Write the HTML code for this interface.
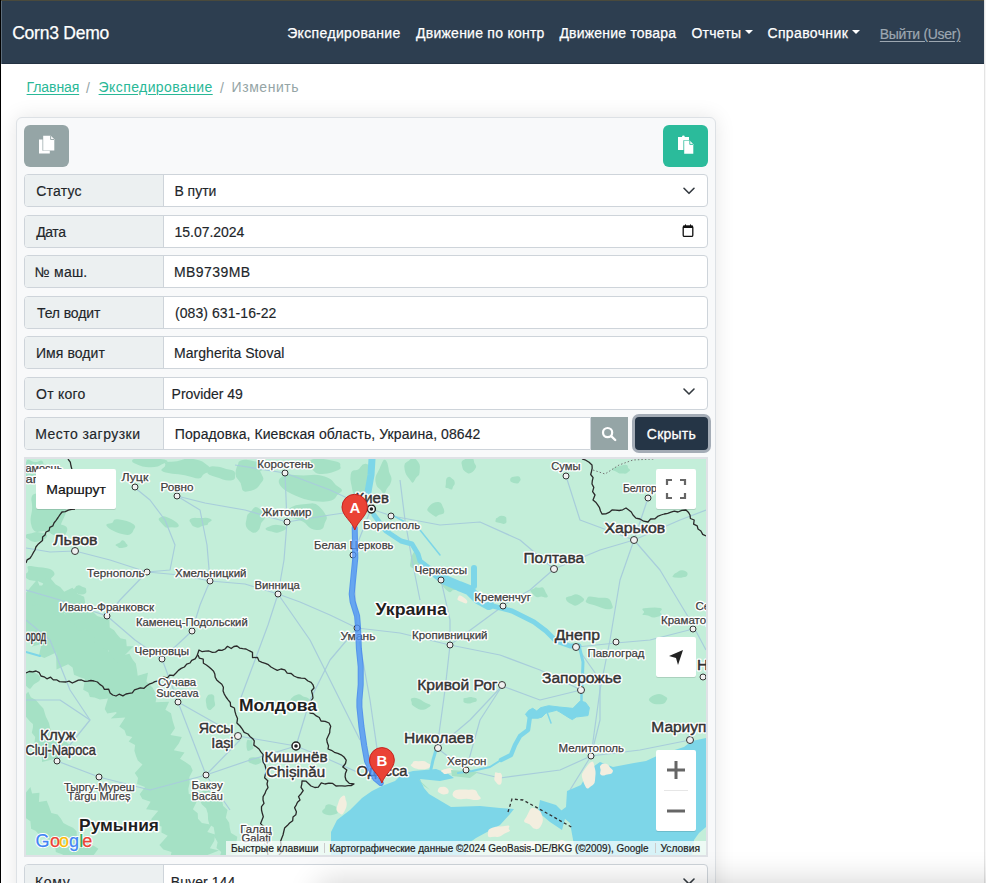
<!DOCTYPE html>
<html><head><meta charset="utf-8">
<style>
*{box-sizing:border-box;margin:0;padding:0}
html,body{width:986px;height:883px;overflow:hidden;background:#fff;font-family:"Liberation Sans",sans-serif}
#root{position:relative;width:986px;height:883px;overflow:hidden;background:#fff}
.abs{position:absolute}
.tx{position:absolute;white-space:nowrap;line-height:1}
#topline{left:0;top:0;width:986px;height:1px;background:#4a4a3c}
#leftline{left:0;top:0;width:1px;height:883px;background:#000}
#navhl{left:1px;top:1px;width:1px;height:63px;background:#5d6d7c}
#rightstrip{left:984px;top:0;width:2px;height:883px;background:#f7f7f7;border-left:1px solid #e4e4e4}
#nav{left:1px;top:1px;width:983px;height:63px;background:#2d3e50;border-bottom:1px solid #233242}
.nt{color:#fff;font-size:14px;-webkit-text-stroke:0.25px #fff}
.caret{position:absolute;width:0;height:0;border-left:4px solid transparent;border-right:4px solid transparent;border-top:4.5px solid #fff}
.bc{font-size:14px;color:#95a5a6}
.bca{color:#2ab897;text-decoration:underline;text-decoration-thickness:1px;text-underline-offset:2px}
#card{left:16px;top:117px;width:700px;height:800px;background:#f8f9fa;border:1px solid #dde1e5;border-radius:6px;box-shadow:0 0 20px rgba(0,0,0,.10)}
.btn{position:absolute;border-radius:6px}
.row{position:absolute;left:24px;width:684px;height:33px;border:1px solid #ced4da;border-radius:4px;background:#fff;overflow:hidden}
.row .lab{position:absolute;left:0;top:0;width:139px;height:31px;background:#ecf0f1;border-right:1px solid #ced4da}
.lt{font-size:14px;color:#212529;-webkit-text-stroke:0.15px #212529}
#bottomshade{left:322px;top:886px;width:900px;height:200px;border-radius:10px;background:#888;box-shadow:0 0 30px 6px rgba(0,0,0,.16)}
</style></head><body><div id="root">
<div class="abs" id="nav"></div>
<div class="abs" id="topline"></div>
<div class="abs" id="leftline"></div>
<div class="abs" id="navhl"></div>
<div class="abs" id="rightstrip"></div>
<div class="tx nt" id="brand" style="left:12.2px;top:25.4px;font-size:17.5px;letter-spacing:-0.23px">Corn3 Demo</div>
<div class="tx nt" id="n1" style="left:287.2px;top:26.4px;letter-spacing:0.36px">Экспедирование</div>
<div class="tx nt" id="n2" style="left:416.0px;top:26.4px;letter-spacing:0.25px">Движение по контр</div>
<div class="tx nt" id="n3" style="left:559.4px;top:26.4px;letter-spacing:0.21px">Движение товара</div>
<div class="tx nt" id="n4" style="left:691.4px;top:26.4px;letter-spacing:0.28px">Отчеты</div>
<div class="caret" style="left:745.3px;top:29.5px"></div>
<div class="tx nt" id="n5" style="left:767.4px;top:26.4px;letter-spacing:0.38px">Справочник</div>
<div class="caret" style="left:851.6px;top:29.5px"></div>
<div class="tx nt" id="n6" style="left:879.8px;top:27.4px;color:#9da7b1;-webkit-text-stroke:0.2px #9da7b1;text-decoration:underline;text-underline-offset:2px;letter-spacing:-0.29px">Выйти (User)</div>

<div class="tx bc bca" id="b1" style="left:26.6px;top:80.0px;letter-spacing:-0.10px">Главная</div>
<div class="tx bc" id="s1" style="left:86.0px;top:81.0px">/</div>
<div class="tx bc bca" id="b2" style="left:98.6px;top:80.0px;letter-spacing:0.41px">Экспедирование</div>
<div class="tx bc" id="s2" style="left:220.0px;top:81.0px">/</div>
<div class="tx bc" id="b3" style="left:231.6px;top:80.0px;letter-spacing:0.54px">Изменить</div>

<div class="abs" id="card"></div>
<div class="btn" style="left:24px;top:125px;width:45px;height:42px;background:#95a5a6"></div>
<svg class="abs" style="left:24px;top:125px" width="45" height="42" viewBox="24 125 45 42">
<path d="M39,139.5 H42.5 V150.8 H49.8 V153.6 H39 Z" fill="#fff"/>
<path d="M43.2,135.8 H50.8 L54.3,139.3 V150.6 H43.2 Z" fill="#fff"/>
<path d="M50.6,135.8 V139.5 H54.3" fill="none" stroke="#95a5a6" stroke-width="0.9"/>
</svg>
<div class="btn" style="left:663px;top:125px;width:45px;height:42px;background:#2bbb9b"></div>
<svg class="abs" style="left:663px;top:125px" width="45" height="42" viewBox="663 125 45 42">
<path d="M678,137 H682 A1.4,1.4 0 0 1 684.8,137 H689 V140.2 H683.4 V150 H678 Z" fill="#fff"/>
<path d="M684.2,140.8 H690 L693.3,144.2 V153.7 H684.2 Z" fill="#fff"/>
<path d="M689.8,140.8 V144.4 H693.3" fill="none" stroke="#2bbb9b" stroke-width="0.9"/>
</svg>

<div class="row" style="top:174px"><div class="lab"></div></div>
<div class="row" style="top:214.5px"><div class="lab"></div></div>
<div class="row" style="top:255px"><div class="lab"></div></div>
<div class="row" style="top:295.5px"><div class="lab"></div></div>
<div class="row" style="top:336px"><div class="lab"></div></div>
<div class="row" style="top:376.5px"><div class="lab"></div></div>
<div class="row" style="top:417px;width:567px;border-radius:4px 0 0 4px"><div class="lab"></div></div>
<div class="btn" style="left:591px;top:417px;width:37px;height:33px;background:#95a5a6;border-radius:0"></div>
<svg class="abs" style="left:595px;top:420px" width="30" height="27" viewBox="595 420 30 27">
<circle cx="607.6" cy="432.6" r="4.6" fill="none" stroke="#fff" stroke-width="2.2"/>
<path d="M611.2,436.2 L615.2,440" stroke="#fff" stroke-width="2.4" stroke-linecap="round"/>
</svg>
<div class="btn" style="left:631.5px;top:413.7px;width:79.5px;height:39.4px;background:#253546;border:3.3px solid #a4acb6;border-radius:7px"></div>
<div class="row" style="top:864px"><div class="lab"></div></div>

<div class="tx lt" id="l1" style="left:36.2px;top:184.2px;letter-spacing:0.20px">Статус</div>
<div class="tx lt" id="v1" style="left:174.4px;top:184.2px">В пути</div>
<div class="tx lt" id="l2" style="left:36.2px;top:225.1px;letter-spacing:-0.40px">Дата</div>
<div class="tx lt" id="v2" style="left:174.6px;top:225.1px;letter-spacing:-0.05px">15.07.2024</div>
<div class="tx lt" id="l3" style="left:34.8px;top:265.4px;letter-spacing:0.20px">№ маш.</div>
<div class="tx lt" id="v3" style="left:174.0px;top:265.4px;letter-spacing:0.43px">MB9739MB</div>
<div class="tx lt" id="l4" style="left:37.0px;top:306.0px;letter-spacing:-0.12px">Тел водит</div>
<div class="tx lt" id="v4" style="left:175.0px;top:306.0px;letter-spacing:0.07px">(083) 631-16-22</div>
<div class="tx lt" id="l5" style="left:36.0px;top:346.3px;letter-spacing:0.06px">Имя водит</div>
<div class="tx lt" id="v5" style="left:174.0px;top:346.3px;letter-spacing:0.04px">Margherita Stoval</div>
<div class="tx lt" id="l6" style="left:36.0px;top:387.3px;letter-spacing:0.24px">От кого</div>
<div class="tx lt" id="v6" style="left:171.6px;top:387.3px;letter-spacing:-0.04px">Provider 49</div>
<div class="tx lt" id="l7" style="left:35.2px;top:427.4px;letter-spacing:0.46px">Место загрузки</div>
<div class="tx lt" id="v7" style="left:174.8px;top:427.4px;letter-spacing:0.08px">Порадовка, Киевская область, Украина, 08642</div>
<div class="tx lt" id="v8" style="left:646.8px;top:427.0px;color:#fff;-webkit-text-stroke:0.3px #fff;letter-spacing:0.24px">Скрыть</div>
<div class="tx lt" id="l9" style="left:35.0px;top:875.0px;letter-spacing:0.67px">Кому</div>
<div class="tx lt" id="v9" style="left:170.8px;top:875.0px;letter-spacing:0.07px">Buyer 144</div>

<svg class="abs" style="left:670px;top:178px" width="35" height="250" viewBox="670 178 35 250">
<path d="M684,188.3 L689,193.3 L694,188.3" fill="none" stroke="#343a40" stroke-width="1.6" stroke-linecap="round" stroke-linejoin="round"/>
<path d="M684,389 L689,394 L694,389" fill="none" stroke="#343a40" stroke-width="1.6" stroke-linecap="round" stroke-linejoin="round"/>
<rect x="683.2" y="226.2" width="9.6" height="10.2" rx="1.2" fill="none" stroke="#111" stroke-width="1.3"/>
<rect x="683" y="225.6" width="10" height="2.4" fill="#111"/>
<rect x="685" y="224.4" width="1" height="2" fill="#111"/><rect x="690" y="224.4" width="1" height="2" fill="#111"/>
</svg>
<svg class="abs" style="left:670px;top:860px" width="35" height="23" viewBox="670 860 35 23">
<path d="M684,879 L689,884 L694,879" fill="none" stroke="#343a40" stroke-width="1.6" stroke-linecap="round" stroke-linejoin="round"/>
</svg>

<div class="abs" id="map" style="left:24px;top:457px;width:684px;height:400px;border:2px solid #dfe2e6;background:#c4eed9;overflow:hidden"></div>
<svg class="abs" style="left:26px;top:459px" width="680" height="396" viewBox="26 459 680 396">
<rect x="0" y="0" width="1000" height="1000" fill="#c3eed9"/>
<g fill="#a5e1c5"><path d="M64.9,506.7Q67.2,511.9 64.2,516.9Q61.3,522.0 59.3,529.9Q57.4,537.9 51.7,533.7Q46.0,529.5 40.2,531.6Q34.3,533.6 31.9,527.3Q29.6,520.9 31.2,514.7Q32.9,508.5 31.6,501.3Q30.3,494.1 36.3,493.5Q42.2,492.9 46.5,488.2Q50.7,483.4 54.0,488.7Q57.3,493.9 59.9,497.7Q62.5,501.4 64.9,506.7Z"/><path d="M45.1,467.9Q46.4,470.0 47.1,473.1Q47.8,476.1 43.6,476.3Q39.4,476.4 37.2,477.2Q35.0,478.1 31.7,478.7Q28.5,479.4 24.9,478.0Q21.4,476.6 21.9,473.3Q22.4,470.0 23.9,467.7Q25.4,465.4 26.2,461.9Q27.0,458.5 31.0,460.8Q35.0,463.2 38.8,461.2Q42.5,459.2 43.2,462.5Q43.9,465.7 45.1,467.9Z"/><path d="M67.2,528.4Q67.5,530.0 66.9,531.5Q66.3,532.9 65.3,534.5Q64.3,536.0 62.2,537.9Q60.0,539.8 58.1,537.6Q56.1,535.4 53.5,534.8Q50.8,534.2 49.9,532.1Q49.0,530.0 50.6,528.2Q52.1,526.4 53.5,524.6Q54.8,522.8 57.4,523.6Q60.0,524.4 61.7,524.8Q63.5,525.2 65.2,526.0Q66.9,526.8 67.2,528.4Z"/><path d="M47.1,535.4Q47.3,537.0 45.7,538.2Q44.2,539.4 42.3,540.1Q40.3,540.8 38.2,541.5Q36.0,542.3 33.6,541.7Q31.2,541.2 29.9,540.2Q28.6,539.1 26.2,538.1Q23.9,537.0 25.0,535.6Q26.1,534.2 29.0,533.8Q31.9,533.4 33.9,532.6Q36.0,531.7 38.5,532.2Q41.1,532.6 44.0,533.2Q46.9,533.8 47.1,535.4Z"/><path d="M211.0,468.2Q213.9,470.9 208.4,472.3Q203.0,473.7 201.8,476.8Q200.6,480.0 192.5,477.3Q184.3,474.6 178.4,474.3Q172.5,474.1 165.8,472.4Q159.0,470.7 162.6,468.4Q166.2,466.1 165.1,463.8Q164.1,461.4 170.6,461.7Q177.1,461.9 181.6,459.9Q186.0,458.0 193.3,459.1Q200.7,460.3 204.4,462.9Q208.1,465.6 211.0,468.2Z"/><path d="M166.9,460.6Q168.9,462.0 165.1,463.1Q161.3,464.2 159.9,465.5Q158.5,466.9 154.3,467.1Q150.0,467.3 146.0,467.0Q142.1,466.6 139.7,465.5Q137.4,464.4 134.4,463.2Q131.4,462.0 132.2,460.4Q133.0,458.7 137.8,458.2Q142.6,457.7 146.3,457.1Q150.0,456.4 152.6,457.7Q155.2,459.0 160.0,459.1Q164.8,459.1 166.9,460.6Z"/><path d="M235.0,472.9Q235.1,475.1 235.1,477.5Q235.0,479.9 231.0,480.4Q226.9,481.0 222.9,479.4Q218.8,477.8 215.7,477.0Q212.6,476.2 209.3,474.7Q205.9,473.1 208.4,471.6Q210.9,470.1 210.0,468.2Q209.1,466.3 212.4,466.3Q215.7,466.4 218.3,466.7Q221.0,467.0 223.3,467.9Q225.6,468.9 230.3,469.8Q234.9,470.8 235.0,472.9Z"/><path d="M262.4,481.3Q260.4,483.7 258.9,485.9Q257.4,488.2 254.5,489.4Q251.5,490.7 246.8,491.5Q242.1,492.4 241.7,487.3Q241.2,482.3 238.2,479.7Q235.3,477.1 235.4,473.6Q235.5,470.1 237.0,466.2Q238.5,462.3 243.3,461.8Q248.0,461.2 252.9,462.5Q257.8,463.7 259.2,468.3Q260.5,472.9 262.4,475.9Q264.4,478.9 262.4,481.3Z"/><path d="M262.0,463.6Q262.6,465.0 264.0,466.9Q265.4,468.8 262.3,470.3Q259.2,471.9 254.6,470.7Q250.0,469.5 247.3,469.3Q244.6,469.0 242.4,468.2Q240.2,467.4 239.4,466.2Q238.6,465.0 238.3,463.5Q238.0,462.0 240.3,460.8Q242.6,459.5 246.3,459.7Q250.0,460.0 252.3,460.8Q254.6,461.6 258.0,461.9Q261.4,462.2 262.0,463.6Z"/><path d="M134.8,527.9Q133.5,529.5 133.1,531.1Q132.8,532.6 130.7,534.1Q128.7,535.5 124.2,534.6Q119.6,533.7 116.3,532.2Q113.0,530.7 110.3,529.2Q107.5,527.6 106.5,525.7Q105.6,523.9 109.4,523.6Q113.2,523.3 113.4,521.0Q113.5,518.7 118.0,519.3Q122.4,520.0 126.7,521.1Q131.0,522.3 133.5,524.3Q136.1,526.4 134.8,527.9Z"/><path d="M178.1,524.0Q179.5,525.6 178.3,526.7Q177.2,527.8 174.3,527.4Q171.4,527.0 168.7,527.6Q166.1,528.3 164.3,526.2Q162.6,524.1 161.3,522.9Q159.9,521.7 159.0,520.3Q158.1,518.9 159.3,518.1Q160.5,517.3 162.2,516.6Q163.8,515.9 166.5,517.0Q169.2,518.1 171.1,519.0Q173.0,520.0 174.9,521.2Q176.8,522.3 178.1,524.0Z"/><path d="M210.4,521.5Q207.6,522.9 207.9,524.0Q208.1,525.2 205.4,525.2Q202.7,525.3 200.5,526.8Q198.4,528.3 195.2,527.1Q192.1,526.0 191.6,524.5Q191.0,523.1 190.1,522.1Q189.1,521.0 189.6,519.9Q190.0,518.9 192.0,518.2Q194.0,517.6 196.7,517.9Q199.4,518.3 203.2,517.9Q207.0,517.4 210.1,518.7Q213.2,520.0 210.4,521.5Z"/><path d="M126.9,544.2Q127.9,545.0 127.5,546.0Q127.1,547.0 125.6,547.2Q124.1,547.5 123.1,547.7Q122.0,547.9 120.7,548.0Q119.3,548.1 118.5,547.4Q117.7,546.7 116.1,545.8Q114.6,545.0 116.3,544.2Q118.0,543.5 119.0,543.1Q120.0,542.7 121.0,541.2Q122.0,539.7 123.5,540.6Q125.1,541.5 125.5,542.5Q125.9,543.5 126.9,544.2Z"/><path d="M265.3,515.7Q265.3,519.0 263.0,520.8Q260.8,522.7 260.4,525.7Q260.1,528.7 257.5,531.2Q255.0,533.7 251.9,532.3Q248.7,530.9 246.9,528.1Q245.2,525.3 245.9,522.1Q246.7,519.0 246.9,516.5Q247.1,514.0 249.2,512.9Q251.2,511.7 253.1,508.8Q255.0,505.9 257.6,507.6Q260.1,509.3 262.7,510.8Q265.4,512.4 265.3,515.7Z"/><path d="M339.4,487.5Q343.9,490.2 340.6,492.2Q337.4,494.1 335.4,497.8Q333.4,501.4 323.5,501.7Q313.6,501.9 304.0,498.9Q294.3,495.8 288.0,492.0Q281.6,488.2 279.5,484.2Q277.3,480.2 281.2,477.2Q285.0,474.2 294.8,475.0Q304.5,475.8 311.1,474.9Q317.8,474.0 324.7,476.5Q331.6,478.9 333.3,481.9Q335.0,484.8 339.4,487.5Z"/><path d="M340.3,464.6Q340.1,466.0 340.6,467.5Q341.2,469.0 338.3,470.0Q335.5,471.0 331.7,472.5Q328.0,473.9 322.1,474.0Q316.1,474.0 314.6,471.7Q313.0,469.4 308.7,467.7Q304.5,466.0 305.8,463.7Q307.1,461.3 311.6,459.7Q316.1,458.0 322.1,458.8Q328.0,459.7 331.6,460.4Q335.2,461.1 337.9,462.1Q340.6,463.2 340.3,464.6Z"/><path d="M370.5,476.4Q368.8,480.8 368.0,483.7Q367.2,486.6 366.1,490.6Q365.0,494.6 362.0,496.8Q359.1,499.1 356.2,497.2Q353.2,495.4 352.5,490.9Q351.8,486.5 350.9,482.7Q350.0,478.9 350.7,474.4Q351.5,469.9 354.9,470.2Q358.4,470.5 360.5,466.9Q362.7,463.4 365.9,463.7Q369.1,464.0 370.6,468.1Q372.2,472.1 370.5,476.4Z"/><path d="M390.4,475.1Q392.2,478.0 391.1,481.7Q390.0,485.4 388.3,486.7Q386.7,488.1 385.4,492.1Q384.0,496.0 382.5,492.8Q380.9,489.5 378.8,488.3Q376.7,487.1 375.7,482.5Q374.7,478.0 376.5,474.5Q378.4,471.0 379.6,468.5Q380.7,465.9 382.4,462.1Q384.0,458.3 386.0,460.6Q388.1,463.0 388.4,467.6Q388.7,472.2 390.4,475.1Z"/><path d="M326.2,515.7Q327.5,517.9 326.2,520.0Q324.9,522.0 323.9,526.3Q322.9,530.6 316.5,530.0Q310.1,529.3 307.1,525.2Q304.1,521.2 297.4,519.6Q290.7,518.0 288.7,513.8Q286.8,509.7 291.1,507.2Q295.5,504.7 300.8,504.4Q306.1,504.1 310.8,503.5Q315.5,502.8 318.6,505.9Q321.8,508.9 323.4,511.2Q325.0,513.4 326.2,515.7Z"/><path d="M286.1,526.9Q288.0,528.0 286.3,529.1Q284.6,530.2 282.6,530.9Q280.6,531.5 278.3,532.4Q276.0,533.2 273.9,532.3Q271.7,531.3 268.9,530.9Q266.2,530.5 265.6,529.3Q264.9,528.0 267.4,527.2Q269.8,526.4 271.0,525.8Q272.3,525.1 274.1,524.9Q276.0,524.6 277.8,524.9Q279.7,525.2 282.0,525.5Q284.3,525.9 286.1,526.9Z"/><path d="M419.9,467.2Q419.7,470.0 419.6,472.6Q419.5,475.2 417.8,476.1Q416.0,477.1 414.5,480.6Q413.0,484.2 411.2,481.4Q409.4,478.6 407.8,476.9Q406.3,475.3 405.4,472.7Q404.5,470.0 404.3,466.5Q404.1,462.9 406.7,462.0Q409.2,461.0 411.1,458.4Q413.0,455.8 415.0,458.1Q417.0,460.5 418.5,462.4Q420.1,464.4 419.9,467.2Z"/><path d="M454.7,482.2Q455.1,484.0 454.0,485.2Q452.9,486.3 452.6,488.1Q452.4,489.8 451.2,489.6Q450.0,489.4 449.2,488.7Q448.4,488.0 446.6,488.1Q444.8,488.2 445.5,486.1Q446.1,484.0 445.9,482.3Q445.8,480.6 446.4,478.8Q447.1,477.0 448.6,476.9Q450.0,476.7 451.1,477.7Q452.2,478.7 453.3,479.6Q454.4,480.5 454.7,482.2Z"/><path d="M443.5,508.3Q444.3,510.0 444.3,512.1Q444.3,514.2 441.6,514.3Q438.9,514.4 437.4,515.8Q436.0,517.3 434.4,516.1Q432.7,515.0 431.4,514.0Q430.2,513.0 428.3,511.5Q426.5,510.0 427.8,508.2Q429.0,506.5 430.4,505.1Q431.8,503.7 433.9,502.7Q436.0,501.7 438.6,502.0Q441.2,502.2 441.9,504.4Q442.7,506.6 443.5,508.3Z"/><path d="M475.3,464.5Q476.6,466.0 475.8,467.8Q475.1,469.5 473.8,470.8Q472.5,472.1 470.8,473.0Q469.0,473.9 467.3,472.9Q465.6,471.9 464.2,470.7Q462.8,469.6 462.5,467.8Q462.1,466.0 461.6,463.7Q461.1,461.4 463.0,460.3Q465.0,459.1 467.0,458.1Q469.0,457.2 471.3,457.6Q473.6,458.1 473.8,460.6Q474.0,463.1 475.3,464.5Z"/><path d="M506.4,518.7Q506.2,520.0 506.5,521.3Q506.8,522.6 505.3,523.5Q503.7,524.3 501.9,523.6Q500.0,523.0 498.9,522.8Q497.8,522.5 496.4,522.2Q495.0,521.9 495.4,521.0Q495.8,520.0 495.8,519.2Q495.7,518.4 496.8,518.0Q497.9,517.6 498.9,516.5Q500.0,515.5 501.8,515.7Q503.6,515.8 505.1,516.6Q506.6,517.4 506.4,518.7Z"/><path d="M52.9,576.4Q50.1,578.1 51.1,580.8Q52.0,583.5 48.6,584.1Q45.2,584.7 41.7,582.7Q38.2,580.7 33.6,580.8Q28.9,580.8 26.0,578.0Q23.1,575.3 26.2,573.5Q29.3,571.7 27.8,568.5Q26.3,565.3 31.0,566.1Q35.7,566.9 39.0,567.2Q42.3,567.4 47.0,568.2Q51.7,568.9 53.7,571.8Q55.7,574.7 52.9,576.4Z"/><path d="M86.1,588.9Q86.1,590.0 86.4,591.2Q86.6,592.4 85.3,593.4Q84.0,594.4 82.0,594.4Q80.0,594.4 78.4,593.9Q76.9,593.4 75.4,592.8Q74.0,592.2 72.4,591.1Q70.8,590.0 73.1,589.2Q75.4,588.3 75.6,586.9Q75.8,585.5 77.9,585.4Q80.0,585.2 81.3,586.2Q82.7,587.1 84.4,587.5Q86.1,587.8 86.1,588.9Z"/><path d="M547.3,594.9Q548.6,596.7 547.1,597.3Q545.7,598.0 543.5,597.1Q541.3,596.1 539.0,597.0Q536.8,597.9 534.8,595.9Q532.8,594.0 531.0,592.0Q529.3,589.9 531.8,589.4Q534.3,588.9 534.8,588.0Q535.3,587.0 537.0,587.5Q538.7,588.0 540.8,587.4Q542.9,586.8 544.0,588.7Q545.1,590.6 545.5,591.9Q546.0,593.1 547.3,594.9Z"/><path d="M611.5,602.9Q612.0,604.4 612.7,606.6Q613.4,608.7 610.0,609.2Q606.5,609.8 602.8,608.3Q599.0,606.9 596.7,605.9Q594.4,604.9 589.7,603.9Q585.0,602.9 585.8,601.1Q586.6,599.3 587.4,597.7Q588.1,596.1 592.1,596.8Q596.2,597.5 598.5,597.7Q600.8,597.9 604.6,597.8Q608.4,597.7 609.7,599.5Q611.0,601.3 611.5,602.9Z"/><path d="M661.1,610.4Q659.0,612.0 661.2,613.6Q663.3,615.3 660.4,616.0Q657.5,616.7 654.7,617.4Q652.0,618.1 650.2,616.6Q648.5,615.1 644.8,615.1Q641.2,615.1 643.1,613.6Q645.0,612.0 643.1,610.4Q641.1,608.9 644.2,608.3Q647.2,607.8 649.6,607.7Q652.0,607.6 654.6,607.5Q657.2,607.5 660.2,608.1Q663.2,608.8 661.1,610.4Z"/><path d="M520.5,479.1Q520.9,480.0 520.2,480.7Q519.5,481.5 519.0,482.5Q518.6,483.5 516.8,483.4Q515.0,483.3 513.7,482.9Q512.5,482.5 511.4,482.0Q510.4,481.5 510.3,480.8Q510.2,480.0 510.2,479.2Q510.2,478.4 511.1,477.7Q512.0,477.0 513.5,476.8Q515.0,476.5 517.1,476.2Q519.1,475.9 519.7,477.1Q520.2,478.3 520.5,479.1Z"/><path d="M629.3,469.1Q631.0,470.0 629.5,471.0Q628.0,471.9 627.0,472.9Q626.0,473.9 624.0,473.6Q622.0,473.3 620.1,473.4Q618.3,473.6 617.6,472.6Q616.9,471.7 614.2,470.8Q611.5,470.0 612.7,468.7Q613.9,467.4 616.2,467.0Q618.5,466.6 620.2,465.8Q622.0,465.1 624.9,464.7Q627.9,464.4 627.8,466.3Q627.6,468.2 629.3,469.1Z"/><path d="M583.7,598.6Q584.8,600.0 583.2,601.2Q581.6,602.4 580.3,603.3Q579.0,604.3 577.0,605.2Q575.0,606.2 573.1,605.1Q571.3,604.0 569.7,603.3Q568.0,602.5 567.0,601.3Q565.9,600.0 565.8,598.3Q565.7,596.7 568.6,596.4Q571.4,596.1 573.2,595.0Q575.0,593.8 577.3,594.4Q579.6,595.0 581.1,596.2Q582.6,597.3 583.7,598.6Z"/><path d="M687.6,573.9Q687.5,575.0 686.8,575.9Q686.2,576.8 684.5,577.1Q682.8,577.4 681.4,577.7Q680.0,578.0 678.6,577.7Q677.2,577.4 674.6,577.4Q671.9,577.3 672.6,576.2Q673.4,575.0 674.0,574.2Q674.7,573.5 675.9,573.0Q677.2,572.5 678.6,571.3Q680.0,570.0 682.5,570.3Q685.0,570.6 686.4,571.7Q687.8,572.8 687.6,573.9Z"/><path d="M430.0,706.4Q428.1,707.5 427.1,708.3Q426.2,709.1 424.6,709.4Q423.0,709.8 420.8,709.7Q418.6,709.6 417.0,708.3Q415.4,707.0 413.4,705.9Q411.3,704.8 411.7,703.7Q412.0,702.5 411.0,700.5Q410.0,698.5 412.7,698.0Q415.3,697.5 418.4,698.8Q421.5,700.1 423.2,701.4Q425.0,702.8 428.5,704.0Q431.9,705.2 430.0,706.4Z"/><path d="M476.7,699.1Q476.9,700.0 476.6,700.9Q476.2,701.8 474.4,702.0Q472.6,702.3 471.3,703.0Q470.0,703.7 468.0,703.5Q466.1,703.4 464.6,702.7Q463.1,702.0 463.4,701.0Q463.7,700.0 463.4,699.0Q463.0,698.0 465.2,697.9Q467.4,697.7 468.7,697.2Q470.0,696.7 471.4,697.1Q472.9,697.5 474.6,697.8Q476.4,698.1 476.7,699.1Z"/><path d="M667.2,698.9Q666.8,700.0 666.3,700.8Q665.8,701.7 665.0,702.7Q664.3,703.7 662.2,703.9Q660.0,704.1 657.4,704.3Q654.7,704.6 652.9,703.6Q651.2,702.6 649.7,701.3Q648.2,700.0 649.3,698.6Q650.4,697.2 652.3,696.1Q654.2,695.0 657.1,694.3Q660.0,693.7 662.3,694.8Q664.6,696.0 666.1,696.9Q667.6,697.8 667.2,698.9Z"/><path d="M308.9,698.7Q310.7,700.0 308.0,700.9Q305.2,701.9 304.9,703.4Q304.6,705.0 302.3,705.3Q300.0,705.5 298.6,704.2Q297.3,702.9 294.4,703.0Q291.4,703.1 290.6,701.5Q289.8,700.0 291.1,698.6Q292.5,697.3 293.9,696.1Q295.3,695.0 297.7,694.4Q300.0,693.9 301.5,695.3Q303.0,696.8 305.0,697.1Q307.0,697.5 308.9,698.7Z"/><path d="M260.4,759.1Q261.0,760.0 261.2,761.2Q261.4,762.5 260.0,763.3Q258.6,764.2 256.8,764.6Q255.0,764.9 253.4,764.3Q251.8,763.7 250.1,763.1Q248.4,762.5 248.3,761.3Q248.2,760.0 248.7,758.9Q249.1,757.7 250.8,757.5Q252.6,757.2 253.8,757.3Q255.0,757.3 256.1,757.4Q257.2,757.4 258.5,757.8Q259.7,758.2 260.4,759.1Z"/><path d="M336.4,808.7Q335.8,810.0 337.2,811.5Q338.6,813.1 336.4,813.8Q334.2,814.5 332.1,815.0Q330.0,815.4 327.8,815.1Q325.6,814.7 323.9,813.8Q322.2,812.8 322.1,811.4Q322.1,810.0 323.8,809.2Q325.5,808.4 325.3,806.6Q325.2,804.8 327.6,804.4Q330.0,804.1 332.0,804.9Q334.0,805.7 335.6,806.5Q337.1,807.4 336.4,808.7Z"/><path d="M457.0,588.4Q457.8,590.3 455.0,590.0Q452.3,589.7 451.3,591.4Q450.2,593.1 447.9,591.2Q445.6,589.4 444.4,587.9Q443.2,586.5 441.8,585.1Q440.4,583.7 439.1,581.6Q437.8,579.4 440.5,579.5Q443.1,579.6 444.4,578.2Q445.8,576.9 448.8,577.4Q451.8,578.0 453.3,580.4Q454.8,582.8 455.6,584.6Q456.3,586.4 457.0,588.4Z"/><path d="M419.8,560.1Q420.6,561.7 420.0,563.9Q419.3,566.0 417.6,567.5Q416.0,568.9 414.2,568.6Q412.4,568.3 411.0,567.3Q409.6,566.3 410.1,564.0Q410.7,561.6 410.7,560.1Q410.7,558.7 411.3,557.1Q411.9,555.6 413.0,553.4Q414.0,551.2 415.5,552.3Q417.0,553.4 418.6,553.7Q420.1,554.0 419.6,556.2Q419.0,558.5 419.8,560.1Z"/><path d="M7.7,614.7 L7.7,623.5 L15.9,622.4 L14.7,632.5 L21.8,632.7 L30.7,630.7 L29.7,640.6 L32.1,646.5 L41.5,643.9 L38.9,655.8 L44.3,658.0 L56.2,652.4 L56.3,661.0 L56.5,669.4 L68.1,664.3 L72.6,667.6 L74.0,674.7 L79.3,677.0 L85.0,678.9 L83.2,689.7 L88.3,692.4 L89.9,697.1 L94.6,697.5 L99.9,699.4 L108.0,698.4 L104.7,708.9 L107.3,713.4 L116.0,711.9 L116.7,712.9 L110.8,718.4 L125.3,717.4 L119.3,726.6 L124.5,730.2 L126.4,735.6 L132.3,737.0 L128.7,741.5 L135.1,745.1 L134.4,750.7 L135.9,755.7 L137.8,760.5 L142.5,764.6 L134.8,772.9 L138.0,778.1 L137.0,784.1 L145.0,786.9 L139.7,794.3 L142.4,799.0 L150.6,801.7 L146.1,809.2 L158.3,810.8 L151.3,819.1 L152.4,824.3 L161.6,826.6 L161.4,832.4 L167.7,835.7 L159.4,844.9 L163.4,849.4 L171.5,852.0 L170.2,858.3 L178.3,860.9 L170.4,869.8 L219.0,850.4 L209.9,848.2 L214.3,840.7 L215.2,834.5 L207.3,831.9 L211.7,824.7 L201.9,823.0 L198.0,818.8 L197.7,813.2 L192.9,809.3 L196.4,802.3 L198.7,795.8 L188.8,794.0 L188.3,788.8 L189.7,782.8 L189.3,777.3 L192.7,770.5 L190.6,765.7 L185.3,761.9 L180.0,758.7 L184.5,752.6 L173.8,750.2 L178.8,743.4 L181.8,737.1 L170.4,735.0 L175.0,728.3 L172.7,721.1 L171.0,713.2 L165.4,709.8 L169.1,701.7 L155.6,702.2 L156.7,695.4 L152.5,687.6 L146.4,681.4 L148.0,672.7 L137.7,675.8 L136.9,669.5 L135.8,663.4 L132.6,659.5 L129.4,653.7 L118.0,656.6 L114.0,652.8 L108.0,651.3 L107.7,642.9 L104.1,638.6 L103.2,630.9 L97.9,628.5 L89.6,629.8 L83.1,628.9 L80.7,623.0 L79.1,616.3 L75.9,611.3 L65.3,615.3 L62.8,609.7 L57.0,607.9 L55.5,601.0 L50.0,598.9 L48.3,592.2 L46.6,585.5 L39.4,585.4 L37.1,579.5Z"/><path d="M32.3,605.4 L39.1,604.3 L42.6,609.7 L48.9,609.7 L53.1,613.7 L58.5,615.4 L65.0,612.7 L65.5,619.1 L70.2,622.2 L75.5,624.6 L77.6,630.7 L85.7,629.7 L90.4,632.8 L94.0,636.6 L94.9,642.2 L99.2,645.1 L103.1,648.3 L108.3,650.3 L111.0,654.7 L114.0,658.9 L117.0,663.0 L133.7,646.3 L126.7,646.2 L126.1,639.6 L120.4,638.2 L117.1,634.4 L114.1,630.2 L109.7,627.4 L109.4,619.7 L102.9,617.8 L97.1,616.0 L93.1,612.1 L92.8,603.8 L85.4,604.0 L84.1,596.8 L77.4,593.7 L72.4,587.7 L64.2,591.7 L60.2,587.1 L55.4,584.2 L51.5,579.6 L46.6,576.7Z"/><path d="M11.8,708.2 L19.1,708.9 L22.9,713.1 L26.6,717.4 L30.3,721.7 L32.9,724.1 L33.0,727.1 L31.8,732.7 L35.2,737.1 L34.4,742.7 L37.5,747.2 L38.3,752.3 L41.7,756.8 L42.1,762.0 L58.0,758.0 L57.6,752.8 L57.8,747.4 L54.5,742.9 L51.3,738.4 L52.5,732.8 L50.1,728.1 L49.0,723.1 L45.8,716.6 L43.4,708.6 L39.6,704.4 L35.9,700.1 L30.8,697.2 L28.3,691.7Z"/><path d="M13.5,808.1 L13.0,817.3 L20.7,816.3 L26.0,818.2 L30.4,821.2 L31.1,828.8 L35.5,830.7 L38.4,833.7 L42.8,836.5 L47.1,839.4 L52.6,840.9 L55.2,845.5 L55.8,852.1 L62.0,854.2 L67.0,857.3 L70.0,861.6 L76.5,861.3 L78.8,866.6 L81.1,871.8 L98.4,848.8 L94.2,846.0 L89.2,844.3 L87.5,838.4 L81.4,838.1 L76.9,837.0 L76.6,831.3 L73.0,827.7 L68.0,825.5 L63.4,823.0 L60.8,818.5 L57.6,814.5 L51.3,812.9 L49.0,806.5 L46.7,800.8 L38.9,802.0 L39.5,792.7 L32.1,793.4 L30.4,787.0Z"/><path d="M197.3,793.8 L199.5,799.0 L201.7,804.2 L206.1,808.2 L207.8,813.6 L208.1,819.7 L209.3,824.2 L213.7,827.2 L214.6,832.4 L215.0,837.7 L217.6,842.3 L216.5,848.0 L221.3,852.1 L219.2,858.1 L237.9,852.7 L240.6,846.6 L236.3,842.4 L237.3,836.7 L231.0,833.1 L229.8,828.0 L229.2,822.8 L225.8,817.7 L227.5,810.0 L223.2,805.9 L222.0,800.3 L218.2,795.9 L216.4,790.6 L213.3,785.9Z"/><path d="M68.6,744.1Q70.9,745.0 70.5,746.5Q70.1,747.9 68.1,749.1Q66.0,750.2 63.0,750.9Q60.0,751.5 57.1,750.8Q54.2,750.1 51.5,749.1Q48.8,748.2 51.0,746.6Q53.3,745.0 52.4,743.8Q51.5,742.6 52.5,740.9Q53.4,739.3 56.7,739.4Q60.0,739.5 63.2,739.5Q66.4,739.5 66.4,741.3Q66.3,743.2 68.6,744.1Z"/><path d="M121.5,788.9Q122.8,790.0 121.8,791.2Q120.7,792.5 119.9,793.9Q119.1,795.4 117.1,795.8Q115.0,796.3 113.7,794.9Q112.4,793.4 110.9,792.9Q109.4,792.4 108.8,791.2Q108.2,790.0 107.1,788.1Q106.1,786.1 108.2,785.0Q110.3,783.8 112.6,784.6Q115.0,785.4 117.4,784.6Q119.8,783.7 120.0,785.7Q120.2,787.8 121.5,788.9Z"/><path d="M40.3,677.8Q40.8,680.0 38.6,681.5Q36.4,683.0 34.8,683.7Q33.3,684.5 31.6,687.3Q30.0,690.1 28.0,687.8Q26.0,685.5 24.5,684.4Q23.1,683.2 19.8,681.6Q16.6,680.0 17.9,677.5Q19.1,675.0 22.4,674.5Q25.7,674.1 27.9,671.8Q30.0,669.4 32.6,671.1Q35.1,672.9 37.4,674.2Q39.7,675.5 40.3,677.8Z"/><path d="M214.3,697.9Q214.0,700.0 214.8,702.6Q215.7,705.2 214.3,706.5Q212.8,707.9 211.4,709.2Q210.0,710.6 208.4,709.7Q206.8,708.8 206.5,706.1Q206.3,703.4 205.9,701.7Q205.5,700.0 206.1,698.5Q206.7,696.9 207.4,695.9Q208.1,694.8 209.1,694.6Q210.0,694.4 211.1,694.2Q212.2,694.0 213.4,694.9Q214.6,695.7 214.3,697.9Z"/><path d="M252.5,744.0Q252.6,745.0 253.3,746.7Q253.9,748.4 252.8,749.0Q251.8,749.6 250.9,749.9Q250.0,750.2 248.8,750.8Q247.6,751.4 247.1,749.7Q246.6,748.0 246.5,746.5Q246.5,745.0 246.5,743.5Q246.6,742.0 247.1,740.5Q247.7,739.1 248.9,740.0Q250.0,740.9 251.3,739.5Q252.7,738.1 252.5,740.5Q252.3,743.0 252.5,744.0Z"/></g>
<!-- roads / rivers thin -->
<g fill="none" stroke="#a8cddb" stroke-width="1.2" stroke-linejoin="round">
<path d="M26,548 L50,552 75,551 110,560 147,572 180,575 210,581 245,584 278,594 300,602 330,615 357,628 400,633 450,645 500,655 540,670 581,690"/>
<path d="M134,487 L150,500 165,520 175,545 170,570 147,572"/>
<path d="M177,496 L205,503 245,510 287,522 330,515 371,509 392,516 440,525 480,522 520,540 554,569"/>
<path d="M287,522 L284,560 278,594 268,625 255,660 240,700"/>
<path d="M210,581 L207,545 200,510 177,496"/>
<path d="M192,631 L200,605 210,581"/>
<path d="M107,616 L120,600 147,572"/>
<path d="M107,616 L135,640 162,659 192,631"/>
<path d="M285,473 L287,522"/>
<path d="M371,509 L353,555 357,628 370,700 382,783"/>
<path d="M441,580 L450,620 450,645 445,690 437,748"/>
<path d="M503,606 L450,645"/>
<path d="M502,606 L530,590 554,569 600,550 634,540 680,520 706,510"/>
<path d="M566,476 L580,520 634,540"/>
<path d="M634,540 L620,580 610,640 600,690 591,756 570,790"/>
<path d="M634,540 L660,570 690,620 706,650"/>
<path d="M648,498 L634,540"/>
<path d="M577,647 L616,643 650,640 693,629"/>
<path d="M577,647 L600,680 600,720 591,756"/>
<path d="M502,686 L540,700 581,690"/>
<path d="M502,686 L480,720 466,770"/>
<path d="M437,748 L466,770 500,778 560,770 591,756 640,750 690,740"/>
<path d="M437,748 L470,720 502,686"/>
<path d="M296,746 L330,760 382,783"/>
<path d="M296,746 L250,760 206,775"/>
<path d="M296,746 L310,700 330,660 357,628"/>
<path d="M162,659 L178,702 206,775 230,810"/>
<path d="M99,777 L150,790 206,775 240,740"/>
<path d="M57,761 L99,777"/>
<path d="M26,700 L60,700 90,720 57,761"/>
<path d="M26,620 L50,640 70,690 90,720"/>
<path d="M235,465 L285,473 330,490 371,509"/>
<path d="M278,594 L310,640 340,700 360,740"/>
<path d="M400,480 L405,520 412,560 420,600"/>
<path d="M26,590 L60,600 107,616"/>
<path d="M178,702 L238,736 296,746"/>
</g>
<!-- sea -->
<g fill="#7dd6e8">
<path d="M331,855 L331,832 337,820 350,810 362,798 372,791 382,786 395,781 402,774 413,771 436,769 447,773 454,778 440,781 420,779 424,788 429,794 451,807 480,806 500,808 514,809 510,814 500,825 476,838 469,843 466,855 Z"/>
<path d="M576,856 L570,823 558,813 566,807 567,791 581,785 590,769 600,762 613,767 634,763 646,761 659,755 684,747 692,741 706,738 706,856Z"/>
<path d="M540,800 L556,805 566,815 562,830 550,822 538,812Z"/>
</g>
<path d="M692,856 L694,840 699,833 706,827 706,856Z" fill="#c3eed9"/>
<!-- sand -->
<g fill="#f3eedf"><path d="M346.7,804.4Q346.6,806.4 345.8,808.6Q344.9,810.8 343.5,813.0Q342.1,815.3 340.8,814.3Q339.4,813.4 338.3,812.6Q337.3,811.7 336.8,810.0Q336.2,808.2 337.2,806.0Q338.1,803.8 338.7,801.6Q339.2,799.4 340.5,797.8Q341.9,796.2 343.5,795.5Q345.1,794.9 345.3,797.4Q345.5,799.9 346.2,801.1Q346.8,802.3 346.7,804.4Z"/><path d="M477.8,793.9Q478.5,795.1 480.2,797.0Q481.9,799.0 478.6,799.8Q475.2,800.6 471.4,799.4Q467.6,798.3 463.0,799.0Q458.4,799.8 455.3,798.0Q452.2,796.3 452.5,794.4Q452.8,792.5 454.1,791.0Q455.4,789.5 459.1,789.4Q462.9,789.3 465.7,789.6Q468.4,789.8 472.0,789.6Q475.6,789.5 476.4,791.1Q477.1,792.7 477.8,793.9Z"/><path d="M448.7,791.6Q448.7,792.4 448.2,793.2Q447.7,793.9 446.5,794.0Q445.3,794.0 444.1,794.4Q442.8,794.7 441.5,794.0Q440.2,793.3 438.8,792.4Q437.3,791.5 437.8,790.3Q438.2,789.2 438.7,788.2Q439.3,787.3 440.7,787.0Q442.2,786.8 443.7,786.8Q445.3,786.8 446.5,787.7Q447.8,788.6 448.3,789.7Q448.8,790.7 448.7,791.6Z"/><path d="M429.5,764.1Q432.0,765.0 431.1,766.3Q430.2,767.6 427.6,768.4Q425.0,769.2 422.0,769.3Q419.0,769.5 416.8,768.8Q414.6,768.1 413.1,767.4Q411.7,766.7 411.0,765.8Q410.3,765.0 411.4,764.3Q412.6,763.5 412.9,762.2Q413.2,761.0 416.1,761.1Q419.0,761.2 422.0,761.0Q425.0,760.8 426.1,762.0Q427.1,763.1 429.5,764.1Z"/><path d="M454.1,770.4Q455.6,771.0 455.0,771.9Q454.3,772.8 452.2,772.8Q450.1,772.8 449.1,773.1Q448.0,773.5 446.1,773.9Q444.3,774.2 443.6,773.4Q442.9,772.5 441.6,771.7Q440.3,771.0 441.7,770.3Q443.1,769.6 444.4,769.3Q445.8,769.1 446.9,768.4Q448.0,767.8 449.8,767.9Q451.5,768.0 452.0,768.8Q452.5,769.7 454.1,770.4Z"/><path d="M502.0,776.5Q501.8,778.0 501.8,779.3Q501.9,780.7 501.5,782.7Q501.2,784.6 499.6,784.8Q498.0,784.9 497.0,783.5Q496.1,782.0 495.2,781.3Q494.3,780.5 494.3,779.3Q494.2,778.0 494.5,776.9Q494.8,775.8 494.9,773.8Q495.1,771.9 496.5,772.5Q498.0,773.2 499.3,772.9Q500.6,772.6 501.4,773.9Q502.2,775.1 502.0,776.5Z"/><path d="M509.2,826.9Q508.1,828.9 509.6,829.9Q511.1,830.9 507.5,832.3Q503.8,833.7 501.7,835.5Q499.6,837.2 496.9,836.9Q494.2,836.7 491.3,837.1Q488.5,837.4 488.1,836.3Q487.7,835.2 487.9,834.0Q488.1,832.8 488.2,831.0Q488.4,829.2 492.3,827.8Q496.3,826.4 499.3,826.5Q502.4,826.7 506.3,825.8Q510.3,825.0 509.2,826.9Z"/><path d="M542.6,817.6Q543.1,819.6 542.6,821.9Q542.0,824.2 540.4,826.8Q538.9,829.5 535.9,829.1Q532.8,828.6 531.4,826.2Q530.0,823.7 526.4,822.9Q522.7,822.1 524.8,819.2Q526.9,816.4 527.7,814.3Q528.6,812.3 529.9,809.7Q531.3,807.0 534.0,808.1Q536.8,809.2 538.8,810.3Q540.8,811.4 541.4,813.5Q542.1,815.6 542.6,817.6Z"/><path d="M595.5,774.5Q595.2,777.0 595.0,780.5Q594.9,784.0 592.9,784.9Q591.0,785.9 589.1,787.7Q587.3,789.5 586.0,787.5Q584.8,785.5 583.9,783.3Q583.0,781.0 582.1,777.6Q581.2,774.2 583.3,771.4Q585.4,768.5 587.1,766.1Q588.8,763.7 591.0,762.1Q593.2,760.5 593.9,764.0Q594.6,767.6 595.2,769.8Q595.7,771.9 595.5,774.5Z"/><path d="M611.7,768.9Q613.5,770.0 612.8,771.8Q612.2,773.6 610.4,774.0Q608.5,774.4 607.3,774.6Q606.0,774.9 604.3,775.4Q602.6,775.9 601.0,774.9Q599.4,773.8 600.3,771.9Q601.1,770.0 600.2,768.1Q599.4,766.2 600.9,764.9Q602.3,763.6 604.2,763.6Q606.0,763.6 607.4,764.3Q608.9,765.0 609.4,766.4Q610.0,767.7 611.7,768.9Z"/><path d="M569.2,844.7Q569.2,846.0 571.1,847.9Q573.1,849.8 569.6,850.1Q566.2,850.4 564.1,851.6Q562.0,852.7 559.9,851.6Q557.7,850.4 554.7,850.0Q551.7,849.6 551.5,847.8Q551.4,846.0 552.9,844.7Q554.4,843.4 556.2,842.6Q558.0,841.8 560.0,840.5Q562.0,839.2 563.9,840.7Q565.7,842.1 567.5,842.8Q569.2,843.5 569.2,844.7Z"/><path d="M467.2,601.0Q467.5,602.0 467.1,602.8Q466.7,603.6 465.1,603.3Q463.5,603.0 462.1,602.1Q460.8,601.3 459.0,600.7Q457.2,600.1 457.4,599.0Q457.7,598.0 458.0,597.5Q458.3,597.0 458.5,596.3Q458.7,595.7 459.7,595.6Q460.7,595.4 461.9,596.2Q463.1,597.1 464.1,597.7Q465.1,598.3 466.0,599.2Q466.9,600.1 467.2,601.0Z"/><path d="M538.5,843.4Q538.3,845.0 536.9,846.0Q535.4,846.9 534.5,848.0Q533.7,849.0 531.8,850.1Q530.0,851.2 527.4,850.9Q524.8,850.6 523.6,849.2Q522.4,847.7 521.8,846.4Q521.1,845.0 521.9,843.7Q522.7,842.4 524.8,842.0Q526.9,841.6 528.4,841.5Q530.0,841.4 531.4,841.7Q532.8,841.9 535.7,841.9Q538.6,841.9 538.5,843.4Z"/></g>
<g fill="#a5e1c5">
<path d="M451,770 L478,772 470,778 452,776Z"/>
<path d="M418,779 L430,790 424,786Z"/>
</g>
<!-- rivers / reservoirs -->
<g fill="none" stroke="#7dd6e8" stroke-linecap="round" stroke-linejoin="round">
<path d="M372,459 L371,475 368,492" stroke-width="7"/>
<path d="M374,515 L386,531 401,541 412,544 418,554 420,561 429,568 437,574" stroke-width="5"/>
<path d="M437,574 L445,580 459,586 469,590 478,599 489,605" stroke-width="10"/>
<path d="M489,605 L512,611 534,622 546,631 556,641 570,646 579,646" stroke-width="5"/>
<path d="M474,568 L474,586" stroke-width="6"/>
<path d="M579,645 L583,662 582,690" stroke-width="3"/>
<path d="M530,716 L528,730 520,736 515,745 511,755 501,760" stroke-width="4.5"/>
<path d="M501,760 L490,767 472,771 458,773" stroke-width="2"/>
<path d="M547,712 L551,723" stroke-width="1.5"/>
<path d="M581.5,694 L581.5,702" stroke-width="2.5"/>
<path d="M572.3,709 L580.2,701 585.5,702.4 589.4,707.7 588,715.6 576.2,717 572.3,719.6 569.6,718.2 559.1,711.6 556.5,710.3 548.6,712.3 546,713 542,717 538,718.2 531.4,718.2 527.5,717 525.5,714.3 528.8,710.3 532.7,708.3 536.7,711 540.6,707.7 548.6,705.7 559.1,707 572.3,708.3Z" fill="#7dd6e8" stroke-width="1"/>
<path d="M392,515 L420,530 440,555" stroke-width="1.5"/>
<path d="M431,769 L433,760 436,750" stroke-width="3"/>
<path d="M26,652 L40,656" stroke-width="2"/>
</g>
<!-- borders -->
<g fill="none" stroke="#2a2a2a" stroke-width="1.3" stroke-linejoin="round"><path d="M68.0,459.0 L70.3,462.2 L71.0,466.0 L71.8,468.9 L71.3,472.0 L72.0,475.0"/><path d="M75.0,509.0 L71.7,509.4 L68.4,510.2 L65.3,511.7 L62.0,512.0 L60.0,514.7 L58.1,517.5 L56.1,520.3 L54.0,523.0 L52.8,525.9 L49.8,527.3 L49.1,530.6 L46.0,532.0 L45.0,535.0 L42.6,537.0 L42.5,540.5 L40.1,542.5 L37.8,544.6 L35.9,547.0 L35.0,550.0 L33.3,552.7 L31.8,555.5 L30.1,558.1 L27.1,559.9 L26.0,563.0"/><path d="M26.0,673.0 L29.2,671.5 L32.7,671.9 L36.0,671.0 L39.3,672.7 L41.0,676.0 L44.1,676.8 L46.9,678.8 L50.6,677.2 L53.3,679.9 L56.6,679.8 L59.5,681.6 L62.7,681.8 L66.0,682.0 L69.1,681.1 L72.3,683.0 L75.3,681.6 L78.4,680.1 L81.5,680.0 L84.7,681.3 L87.8,681.1 L90.9,680.5 L94.0,681.0 L97.4,682.0 L99.8,684.4 L102.6,686.2 L104.4,689.3 L108.6,689.1 L110.1,692.9 L112.7,695.0 L116.0,696.0 L119.1,694.2 L122.9,695.9 L126.0,694.0 L129.1,693.4 L132.3,692.8 L134.5,689.9 L137.5,688.9 L140.4,687.8 L144.0,688.3 L146.5,686.0 L149.1,684.2 L152.1,683.2 L154.8,681.6 L158.0,681.0 L160.4,678.4 L163.5,677.2 L167.4,677.9 L169.7,675.1 L173.5,675.5 L176.0,673.0 L178.4,670.4 L181.2,668.4 L184.4,667.0 L186.7,664.2 L190.0,663.0 L191.7,660.3 L195.1,658.9 L196.9,656.2 L198.0,653.0"/><path d="M198.0,653.0 L199.0,650.0 L202.2,651.7 L205.6,651.2 L209.0,651.0 L212.4,652.4 L215.6,652.1 L218.6,650.0 L221.9,650.4 L225.0,649.0 L227.5,646.3 L231.2,648.5 L233.9,646.5 L237.0,646.0 L239.6,648.1 L242.8,648.6 L246.0,649.0 L249.2,650.7 L252.5,652.3 L252.5,657.6 L257.5,657.4 L259.0,661.0 L262.1,662.4 L265.3,663.4 L268.4,664.7 L271.0,667.0 L274.1,668.7 L277.3,670.4 L281.0,669.0 L284.8,669.8 L287.2,673.1 L291.2,673.5 L294.0,676.0 L297.4,677.5 L301.2,678.1 L305.0,678.4 L308.0,681.0 L311.1,682.4 L313.0,684.8 L314.0,688.0 L311.5,690.8 L312.5,694.5 L313.0,698.0 L311.0,701.0 L309.0,703.9 L308.3,706.8 L310.5,710.0 L310.0,713.0 L313.7,713.7 L316.3,715.9 L319.3,717.5 L321.0,721.0 L325.2,721.3 L329.0,723.0 L330.7,726.3 L329.9,729.5 L329.7,732.8 L328.2,736.0 L326.7,739.2 L327.2,742.5 L328.5,745.8 L328.0,749.0 L331.4,750.3 L334.4,752.3 L337.8,753.3 L341.1,754.8 L344.0,757.0 L346.2,760.1 L345.5,763.5 L342.8,767.0 L346.8,770.0 L345.4,773.4 L345.1,776.8 L346.0,780.0 L349.3,783.4 L354.0,784.0 L351.1,785.6 L348.1,785.7 L345.1,786.1 L342.0,785.8 L339.0,785.9 L336.0,786.0 L332.7,783.4 L328.9,783.2 L325.0,784.0 L321.3,782.9 L318.3,787.1 L314.8,787.5 L311.0,786.0 L308.4,783.5 L305.8,781.1 L302.0,781.0 L301.8,784.2 L301.0,787.3 L303.2,790.7 L301.1,793.7 L298.5,796.6 L300.0,800.0 L297.5,802.3 L296.2,805.1 L294.6,807.7 L296.4,811.8 L295.8,814.8 L293.0,817.0 L292.7,820.7 L289.6,823.0 L287.3,825.6 L284.6,828.1 L283.8,831.5 L283.0,835.0 L281.7,838.2 L280.5,841.4 L281.2,845.0 L280.1,848.3 L281.7,852.1 L279.0,855.0"/><path d="M198.0,655.0 L199.4,658.2 L203.2,659.1 L203.4,663.3 L206.4,665.0 L209.0,667.0 L211.3,669.1 L213.6,671.2 L214.8,673.9 L215.2,677.3 L216.7,679.9 L219.0,682.0 L221.8,684.3 L223.4,687.3 L223.1,691.0 L224.3,694.1 L226.0,697.0 L228.1,699.8 L230.3,702.5 L230.6,706.2 L234.4,708.0 L235.0,711.6 L236.0,715.0 L237.5,718.6 L236.9,723.0 L240.0,726.0 L242.3,729.1 L244.2,732.4 L248.0,734.0 L249.9,736.4 L252.5,738.4 L254.3,740.9 L253.8,745.1 L256.5,747.0 L259.0,749.0 L260.9,751.9 L263.2,754.7 L262.6,758.6 L263.1,762.0 L265.0,765.0 L265.7,768.1 L266.6,771.2 L265.3,774.6 L264.6,777.8 L267.8,780.7 L267.0,784.0 L268.0,787.7 L266.0,790.6 L264.9,793.7 L263.1,796.6 L263.0,800.0 L264.0,803.4 L261.5,806.6 L261.5,810.0 L262.3,813.3 L263.3,816.7 L262.0,820.0 L260.6,823.6 L263.7,826.6 L262.2,830.2 L265.1,833.2 L265.6,836.5 L265.0,840.0 L264.6,843.2 L267.0,845.8 L265.0,849.4 L267.4,852.0 L268.0,855.0"/><path d="M582.0,459.0 L585.8,460.2 L589.1,462.3 L592.0,465.0 L592.2,468.2 L591.5,471.3 L590.7,474.5 L593.1,477.7 L592.3,480.8 L592.0,484.0 L593.8,487.4 L592.6,491.7 L595.0,495.0 L593.0,500.0 L595.7,502.2 L597.7,504.9 L599.5,507.7 L600.5,511.0 L602.0,514.0 L605.8,513.8 L609.1,512.4 L612.0,510.0 L615.6,510.2 L619.2,510.5 L622.7,509.8 L626.0,508.0 L628.7,510.0 L631.3,512.0 L633.0,515.0 L635.9,518.1 L640.0,519.0 L643.7,521.2 L648.0,522.0 L650.6,519.0 L654.7,518.9 L657.6,516.4 L661.0,515.0 L664.3,514.0 L667.7,513.3 L671.0,512.2 L674.3,511.1 L678.0,512.0 L681.8,510.4 L686.0,510.0 L688.3,512.2 L690.0,515.0 L690.4,518.5 L694.2,520.0 L693.6,524.1 L697.2,525.8 L698.0,529.0 L700.9,531.0 L702.7,534.4 L706.0,536.0"/></g>
<g fill="none" stroke="#333" stroke-width="1.3" stroke-dasharray="3,2.5">
<path d="M508,812 L512,799 523,800 552,816 573,828"/>
</g>
<g fill="none" stroke="#777" stroke-width="1" stroke-dasharray="1.5,2">
<path d="M593,470 L605,474 619,465 633,460 654,459"/>
</g>
<!-- city dots -->
<g fill="#f0f0f0" stroke="#333" stroke-width="1.0">
<circle cx="285" cy="473" r="3"/><circle cx="566" cy="476" r="3"/><circle cx="135" cy="487" r="3"/><circle cx="177" cy="496" r="3"/>
<circle cx="391" cy="516" r="3"/><circle cx="287" cy="522" r="3"/><circle cx="648" cy="498" r="3"/><circle cx="634" cy="540" r="3.5"/>
<circle cx="75" cy="551" r="3.5"/><circle cx="353" cy="555" r="3"/><circle cx="554" cy="569" r="3.5"/><circle cx="147" cy="572" r="3"/>
<circle cx="210" cy="581" r="3"/><circle cx="278" cy="594" r="3"/><circle cx="441" cy="580" r="3"/><circle cx="503" cy="606" r="3"/>
<circle cx="107" cy="616" r="3"/><circle cx="192" cy="631" r="3"/><circle cx="357" cy="628" r="3"/><circle cx="450" cy="645" r="3"/>
<circle cx="576" cy="647" r="3.5"/><circle cx="616" cy="642" r="3"/><circle cx="693" cy="629" r="3"/><circle cx="162" cy="659" r="3"/>
<circle cx="178" cy="702" r="3"/><circle cx="502" cy="685" r="3.5"/><circle cx="581" cy="690" r="3.5"/><circle cx="690" cy="740" r="3.5"/>
<circle cx="57" cy="761" r="3"/><circle cx="238" cy="736" r="3.5"/><circle cx="438" cy="748" r="3.5"/><circle cx="591" cy="756" r="3"/>
<circle cx="466" cy="770" r="3"/><circle cx="703" cy="677" r="3"/><circle cx="99" cy="777" r="3"/><circle cx="206" cy="775" r="3"/>
</g>
<circle cx="371.4" cy="509" r="4" fill="#fff" stroke="#222" stroke-width="1.5"/><circle cx="371.4" cy="509" r="1.8" fill="#222"/>
<circle cx="296" cy="746" r="4" fill="#fff" stroke="#222" stroke-width="1.5"/><circle cx="296" cy="746" r="1.8" fill="#222"/>
<!-- labels -->
<g font-family="Liberation Sans, sans-serif" fill="#fff" stroke="#fff" stroke-width="3" stroke-linejoin="round" font-size="11.5">
<text x="257.3" y="467.5" textLength="56.1" lengthAdjust="spacingAndGlyphs">Коростень</text>
<text x="551.2" y="469.7" textLength="29.3" lengthAdjust="spacingAndGlyphs">Сумы</text>
<text x="121.5" y="480.5" textLength="26.8" lengthAdjust="spacingAndGlyphs">Луцк</text>
<text x="160.5" y="490.5" textLength="33.0" lengthAdjust="spacingAndGlyphs">Ровно</text>
<text x="25.5" y="472.3" textLength="37.0" lengthAdjust="spacingAndGlyphs">амосць</text>
<text x="25.5" y="483.3" textLength="12.0" lengthAdjust="spacingAndGlyphs">аг</text>
<text x="363.0" y="528.5" textLength="57.1" lengthAdjust="spacingAndGlyphs">Борисполь</text>
<text x="261.5" y="516.0" textLength="50.0" lengthAdjust="spacingAndGlyphs">Житомир</text>
<text x="622.9" y="492.2" textLength="34.0" lengthAdjust="spacingAndGlyphs">Белгор</text>
<text x="314.1" y="549.0" textLength="79.4" lengthAdjust="spacingAndGlyphs">Белая Церковь</text>
<text x="86.9" y="576.5" textLength="57.6" lengthAdjust="spacingAndGlyphs">Тернополь</text>
<text x="175.0" y="576.5" textLength="71.5" lengthAdjust="spacingAndGlyphs">Хмельницкий</text>
<text x="254.5" y="589.0" textLength="45.4" lengthAdjust="spacingAndGlyphs">Винница</text>
<text x="414.5" y="574.0" textLength="52.5" lengthAdjust="spacingAndGlyphs">Черкассы</text>
<text x="474.2" y="600.7" textLength="56.7" lengthAdjust="spacingAndGlyphs">Кременчуг</text>
<text x="59.3" y="611.2" textLength="94.7" lengthAdjust="spacingAndGlyphs">Ивано-Франковск</text>
<text x="135.9" y="626.0" textLength="111.8" lengthAdjust="spacingAndGlyphs">Каменец-Подольский</text>
<text x="340.5" y="639.7" textLength="35.0" lengthAdjust="spacingAndGlyphs">Умань</text>
<text x="412.0" y="639.2" textLength="75.5" lengthAdjust="spacingAndGlyphs">Кропивницкий</text>
<text x="587.5" y="657.2" textLength="57.0" lengthAdjust="spacingAndGlyphs">Павлоград</text>
<text x="661.0" y="623.7">Краматорск</text>
<text x="695.5" y="609.7">Северодонецк</text>
<text x="134.5" y="654.5" textLength="54.6" lengthAdjust="spacingAndGlyphs">Черновцы</text>
<text x="157.9" y="686.2" textLength="38.3" lengthAdjust="spacingAndGlyphs">Сучава</text>
<text x="156.2" y="696.7" textLength="42.5" lengthAdjust="spacingAndGlyphs">Suceava</text>
<text x="558.5" y="752.0" textLength="65.6" lengthAdjust="spacingAndGlyphs">Мелитополь</text>
<text x="447.1" y="765.0" textLength="39.4" lengthAdjust="spacingAndGlyphs">Херсон</text>
<text x="63.9" y="790.8" textLength="70.9" lengthAdjust="spacingAndGlyphs">Тыргу-Муреш</text>
<text x="67.5" y="800.2" textLength="63.0" lengthAdjust="spacingAndGlyphs">Târgu Mureș</text>
<text x="191.5" y="789.2" textLength="31.3" lengthAdjust="spacingAndGlyphs">Бакэу</text>
<text x="191.5" y="800.0" textLength="31.3" lengthAdjust="spacingAndGlyphs">Bacău</text>
<text x="240.3" y="833.0" textLength="31.5" lengthAdjust="spacingAndGlyphs">Галац</text>
<text x="241.5" y="842.2" textLength="29.3" lengthAdjust="spacingAndGlyphs">Galați</text>
</g>
<g font-family="Liberation Sans, sans-serif" fill="#404040" stroke="#404040" stroke-width="0.25" font-size="11.5">
<text x="257.3" y="467.5" textLength="56.1" lengthAdjust="spacingAndGlyphs">Коростень</text>
<text x="551.2" y="469.7" textLength="29.3" lengthAdjust="spacingAndGlyphs">Сумы</text>
<text x="121.5" y="480.5" textLength="26.8" lengthAdjust="spacingAndGlyphs">Луцк</text>
<text x="160.5" y="490.5" textLength="33.0" lengthAdjust="spacingAndGlyphs">Ровно</text>
<text x="25.5" y="472.3" textLength="37.0" lengthAdjust="spacingAndGlyphs">амосць</text>
<text x="25.5" y="483.3" textLength="12.0" lengthAdjust="spacingAndGlyphs">аг</text>
<text x="363.0" y="528.5" textLength="57.1" lengthAdjust="spacingAndGlyphs">Борисполь</text>
<text x="261.5" y="516.0" textLength="50.0" lengthAdjust="spacingAndGlyphs">Житомир</text>
<text x="622.9" y="492.2" textLength="34.0" lengthAdjust="spacingAndGlyphs">Белгор</text>
<text x="314.1" y="549.0" textLength="79.4" lengthAdjust="spacingAndGlyphs">Белая Церковь</text>
<text x="86.9" y="576.5" textLength="57.6" lengthAdjust="spacingAndGlyphs">Тернополь</text>
<text x="175.0" y="576.5" textLength="71.5" lengthAdjust="spacingAndGlyphs">Хмельницкий</text>
<text x="254.5" y="589.0" textLength="45.4" lengthAdjust="spacingAndGlyphs">Винница</text>
<text x="414.5" y="574.0" textLength="52.5" lengthAdjust="spacingAndGlyphs">Черкассы</text>
<text x="474.2" y="600.7" textLength="56.7" lengthAdjust="spacingAndGlyphs">Кременчуг</text>
<text x="59.3" y="611.2" textLength="94.7" lengthAdjust="spacingAndGlyphs">Ивано-Франковск</text>
<text x="135.9" y="626.0" textLength="111.8" lengthAdjust="spacingAndGlyphs">Каменец-Подольский</text>
<text x="340.5" y="639.7" textLength="35.0" lengthAdjust="spacingAndGlyphs">Умань</text>
<text x="412.0" y="639.2" textLength="75.5" lengthAdjust="spacingAndGlyphs">Кропивницкий</text>
<text x="587.5" y="657.2" textLength="57.0" lengthAdjust="spacingAndGlyphs">Павлоград</text>
<text x="661.0" y="623.7">Краматорск</text>
<text x="695.5" y="609.7">Северодонецк</text>
<text x="134.5" y="654.5" textLength="54.6" lengthAdjust="spacingAndGlyphs">Черновцы</text>
<text x="157.9" y="686.2" textLength="38.3" lengthAdjust="spacingAndGlyphs">Сучава</text>
<text x="156.2" y="696.7" textLength="42.5" lengthAdjust="spacingAndGlyphs">Suceava</text>
<text x="558.5" y="752.0" textLength="65.6" lengthAdjust="spacingAndGlyphs">Мелитополь</text>
<text x="447.1" y="765.0" textLength="39.4" lengthAdjust="spacingAndGlyphs">Херсон</text>
<text x="63.9" y="790.8" textLength="70.9" lengthAdjust="spacingAndGlyphs">Тыргу-Муреш</text>
<text x="67.5" y="800.2" textLength="63.0" lengthAdjust="spacingAndGlyphs">Târgu Mureș</text>
<text x="191.5" y="789.2" textLength="31.3" lengthAdjust="spacingAndGlyphs">Бакэу</text>
<text x="191.5" y="800.0" textLength="31.3" lengthAdjust="spacingAndGlyphs">Bacău</text>
<text x="240.3" y="833.0" textLength="31.5" lengthAdjust="spacingAndGlyphs">Галац</text>
<text x="241.5" y="842.2" textLength="29.3" lengthAdjust="spacingAndGlyphs">Galați</text>
</g>
<g font-family="Liberation Sans, sans-serif" fill="#fff" stroke="#fff" stroke-width="3.2" stroke-linejoin="round" font-size="15.5">
<text x="355.5" y="502.7" textLength="33.4" lengthAdjust="spacingAndGlyphs">Киев</text>
<text x="604.5" y="533.4" textLength="60.6" lengthAdjust="spacingAndGlyphs">Харьков</text>
<text x="53.2" y="545.2" textLength="44.3" lengthAdjust="spacingAndGlyphs">Львов</text>
<text x="523.5" y="562.9" textLength="60.6" lengthAdjust="spacingAndGlyphs">Полтава</text>
<text x="554.7" y="640.4" textLength="45.4" lengthAdjust="spacingAndGlyphs">Днепр</text>
<text x="417.2" y="689.9" textLength="80.3" lengthAdjust="spacingAndGlyphs">Кривой Рог</text>
<text x="542.0" y="682.7" textLength="79.5" lengthAdjust="spacingAndGlyphs">Запорожье</text>
<text x="651.3" y="731.9">Мариуполь</text>
<text x="40.1" y="740.4" textLength="35.4" lengthAdjust="spacingAndGlyphs">Клуж</text>
<text x="25.5" y="754.9" textLength="70.3" lengthAdjust="spacingAndGlyphs">Cluj-Napoca</text>
<text x="198.8" y="732.9" textLength="34.7" lengthAdjust="spacingAndGlyphs">Яссы</text>
<text x="211.2" y="747.9" textLength="22.3" lengthAdjust="spacingAndGlyphs">Iași</text>
<text x="264.5" y="762.4" textLength="63.0" lengthAdjust="spacingAndGlyphs">Кишинёв</text>
<text x="266.2" y="777.4" textLength="58.9" lengthAdjust="spacingAndGlyphs">Chișinău</text>
<text x="404.0" y="742.6" textLength="69.7" lengthAdjust="spacingAndGlyphs">Николаев</text>
<text x="356.5" y="776.4" textLength="51.0" lengthAdjust="spacingAndGlyphs">Одесса</text>
<text x="25.5" y="640.9" textLength="20.6" lengthAdjust="spacingAndGlyphs">ород</text>
<text x="697.0" y="670.0">Новомосковск</text>
</g>
<g font-family="Liberation Sans, sans-serif" fill="#333" stroke="#333" stroke-width="0.45" stroke-linejoin="round" font-size="15.5">
<text x="355.5" y="502.7" textLength="33.4" lengthAdjust="spacingAndGlyphs">Киев</text>
<text x="604.5" y="533.4" textLength="60.6" lengthAdjust="spacingAndGlyphs">Харьков</text>
<text x="53.2" y="545.2" textLength="44.3" lengthAdjust="spacingAndGlyphs">Львов</text>
<text x="523.5" y="562.9" textLength="60.6" lengthAdjust="spacingAndGlyphs">Полтава</text>
<text x="554.7" y="640.4" textLength="45.4" lengthAdjust="spacingAndGlyphs">Днепр</text>
<text x="417.2" y="689.9" textLength="80.3" lengthAdjust="spacingAndGlyphs">Кривой Рог</text>
<text x="542.0" y="682.7" textLength="79.5" lengthAdjust="spacingAndGlyphs">Запорожье</text>
<text x="651.3" y="731.9">Мариуполь</text>
<text x="40.1" y="740.4" textLength="35.4" lengthAdjust="spacingAndGlyphs">Клуж</text>
<text x="25.5" y="754.9" textLength="70.3" lengthAdjust="spacingAndGlyphs">Cluj-Napoca</text>
<text x="198.8" y="732.9" textLength="34.7" lengthAdjust="spacingAndGlyphs">Яссы</text>
<text x="211.2" y="747.9" textLength="22.3" lengthAdjust="spacingAndGlyphs">Iași</text>
<text x="264.5" y="762.4" textLength="63.0" lengthAdjust="spacingAndGlyphs">Кишинёв</text>
<text x="266.2" y="777.4" textLength="58.9" lengthAdjust="spacingAndGlyphs">Chișinău</text>
<text x="404.0" y="742.6" textLength="69.7" lengthAdjust="spacingAndGlyphs">Николаев</text>
<text x="356.5" y="776.4" textLength="51.0" lengthAdjust="spacingAndGlyphs">Одесса</text>
<text x="25.5" y="640.9" textLength="20.6" lengthAdjust="spacingAndGlyphs">ород</text>
<text x="697.0" y="670.0">Новомосковск</text>
</g>
<g font-family="Liberation Sans, sans-serif" fill="#1f1f1f" stroke="#fff" stroke-width="3" stroke-linejoin="round" paint-order="stroke" font-size="17" font-weight="bold">
<text x="375.5" y="614.5" textLength="71.3" lengthAdjust="spacingAndGlyphs">Украина</text>
<text x="238.9" y="711.0" textLength="78.0" lengthAdjust="spacingAndGlyphs">Молдова</text>
<text x="79.1" y="830.5" textLength="79.8" lengthAdjust="spacingAndGlyphs">Румыния</text>
</g>
<!-- route -->
<g opacity="0.8">
<path d="M354.7,528 L355.3,558 353.5,576 351.7,594 352.6,601.5 357.1,616 358,627 358.9,648.6 360.7,666.7 360.7,684.8 359.4,700 359.4,707 361.4,726.3 364.2,745.5 367,761 370.6,768.7 375.6,778.8 380.7,783" fill="none" stroke="#3a7ff0" stroke-width="6" stroke-linecap="round" stroke-linejoin="round"/>
<path d="M354.7,528 L355.3,558 353.5,576 351.7,594 352.6,601.5 357.1,616 358,627 358.9,648.6 360.7,666.7 360.7,684.8 359.4,700 359.4,707 361.4,726.3 364.2,745.5 367,761 370.6,768.7 375.6,778.8 380.7,783" fill="none" stroke="#4f95f6" stroke-width="4" stroke-linecap="round" stroke-linejoin="round"/>
</g>
<!-- markers -->
<g>
<path d="M354.8,530 C352,521 342,516 342,507 A12.6,12.6 0 1 1 367.4,507 C367.4,516 357.6,521 354.8,530Z" fill="#ea4335" stroke="#c5221f" stroke-width="1"/>
<text x="354.8" y="512.5" font-family="Liberation Sans, sans-serif" font-size="15" font-weight="bold" fill="#fff" text-anchor="middle">A</text>
<path d="M381.9,783 C379,774 369.5,769 369.5,760 A12.4,12.4 0 1 1 394.3,760 C394.3,769 384.8,774 381.9,783Z" fill="#ea4335" stroke="#c5221f" stroke-width="1"/>
<text x="381.9" y="765.5" font-family="Liberation Sans, sans-serif" font-size="15" font-weight="bold" fill="#fff" text-anchor="middle">B</text>
</g>
<!-- controls -->
<g>
<rect x="36" y="470" width="80" height="40" rx="2" fill="#000" fill-opacity="0.12"/>
<rect x="36" y="469" width="80" height="40" rx="2" fill="#fff"/>
<text x="46.3" y="493.5" font-family="Liberation Sans, sans-serif" font-size="13.5" fill="#111" stroke="#111" stroke-width="0.2" textLength="59.5" lengthAdjust="spacingAndGlyphs">Маршрут</text>
<rect x="656" y="470" width="40" height="40" rx="2" fill="#000" fill-opacity="0.12"/>
<rect x="656" y="469" width="40" height="40" rx="2" fill="#fff"/>
<path d="M667,485 V480 H672 M680,480 H685 V485 M685,493 V498 H680 M672,498 H667 V493" fill="none" stroke="#666" stroke-width="2.2"/>
<rect x="656" y="638" width="40" height="40" rx="2" fill="#000" fill-opacity="0.12"/>
<rect x="656" y="637" width="40" height="40" rx="2" fill="#fff"/>
<path d="M683,650 L669,656 676,658 678,665Z" fill="#222"/>
<rect x="656" y="751" width="40" height="81" rx="2" fill="#000" fill-opacity="0.12"/>
<rect x="656" y="750" width="40" height="81" rx="2" fill="#fff"/>
<rect x="664" y="790" width="24" height="1" fill="#e6e6e6"/>
<path d="M667,770 H685 M676,761 V779" stroke="#666" stroke-width="3"/>
<path d="M667,811 H685" stroke="#666" stroke-width="3"/>
</g>
<!-- google logo -->
<g font-family="Liberation Sans, sans-serif" font-size="18" stroke="#fff" stroke-width="2.2" stroke-linejoin="round" fill="#fff">
<text x="35.5" y="847">G</text><text x="50" y="847">o</text><text x="59" y="847">o</text><text x="69" y="847">g</text><text x="79.3" y="847">l</text><text x="82.3" y="847">e</text>
</g>
<g font-family="Liberation Sans, sans-serif" font-size="18" stroke-width="0.25">
<text x="35.5" y="847" fill="#4285f4" stroke="#4285f4">G</text><text x="50" y="847" fill="#ea4335" stroke="#ea4335">o</text><text x="59" y="847" fill="#fbbc05" stroke="#fbbc05">o</text><text x="69" y="847" fill="#4285f4" stroke="#4285f4">g</text><text x="79.3" y="847" fill="#34a853" stroke="#34a853">l</text><text x="82.3" y="847" fill="#ea4335" stroke="#ea4335">e</text>
</g>
<!-- attribution -->
<rect x="226" y="841" width="480" height="14" fill="#fff" fill-opacity="0.7"/>
<g font-family="Liberation Sans, sans-serif" font-size="10" fill="#222" stroke="#222" stroke-width="0.2">
<text x="231" y="851.5" textLength="87.5" lengthAdjust="spacingAndGlyphs">Быстрые клавиши</text>
<text x="329.5" y="851.5" textLength="319" lengthAdjust="spacingAndGlyphs">Картографические данные ©2024 GeoBasis-DE/BKG (©2009), Google</text>
<text x="660.5" y="851.5" textLength="39.5" lengthAdjust="spacingAndGlyphs">Условия</text>
</g>
<rect x="324" y="843" width="1" height="10" fill="#ccc"/>
<rect x="655" y="843" width="1" height="10" fill="#ccc"/>
</svg>

<div class="abs" id="bottomshade"></div>
</div></body></html>
